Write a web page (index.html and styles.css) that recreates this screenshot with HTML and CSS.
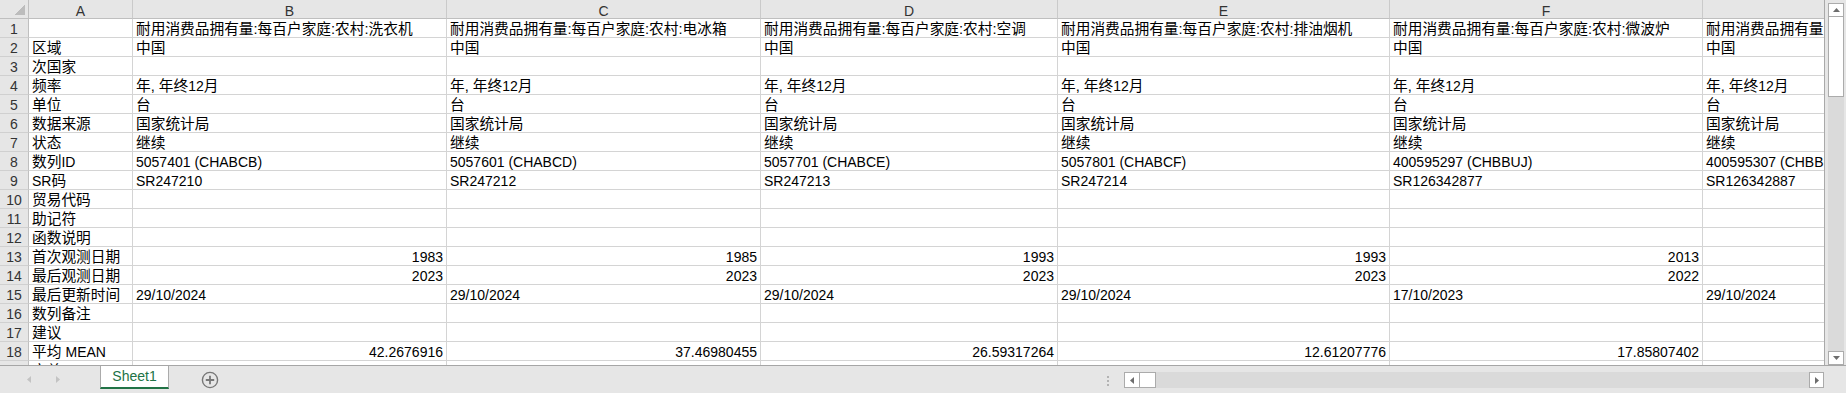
FILE: index.html
```html
<!DOCTYPE html>
<html lang="zh-CN">
  <head>
    <meta charset="UTF-8" />
    <title>Sheet1</title>
    <link rel="stylesheet" href="styles.css">
  </head>
  <body>
    <div class="app">
      <div class="sheet">
        <div class="cells">
          <div class="corner"></div>
          <div class="ch">A</div>
          <div class="ch">B</div>
          <div class="ch">C</div>
          <div class="ch">D</div>
          <div class="ch">E</div>
          <div class="ch">F</div>
          <div class="ch">G</div>

          <div class="rh">1</div>
          <div></div>
          <div>耐用消费品拥有量:每百户家庭:农村:洗衣机</div>
          <div>耐用消费品拥有量:每百户家庭:农村:电冰箱</div>
          <div>耐用消费品拥有量:每百户家庭:农村:空调</div>
          <div>耐用消费品拥有量:每百户家庭:农村:排油烟机</div>
          <div>耐用消费品拥有量:每百户家庭:农村:微波炉</div>
          <div>耐用消费品拥有量:每百户家庭:农村:彩色电视机</div>

          <div class="rh">2</div>
          <div>区域</div>
          <div>中国</div>
          <div>中国</div>
          <div>中国</div>
          <div>中国</div>
          <div>中国</div>
          <div>中国</div>

          <div class="rh">3</div>
          <div>次国家</div>
          <div></div><div></div><div></div><div></div><div></div><div></div>

          <div class="rh">4</div>
          <div>频率</div>
          <div>年, 年终<span class="en">12</span>月</div>
          <div>年, 年终<span class="en">12</span>月</div>
          <div>年, 年终<span class="en">12</span>月</div>
          <div>年, 年终<span class="en">12</span>月</div>
          <div>年, 年终<span class="en">12</span>月</div>
          <div>年, 年终<span class="en">12</span>月</div>

          <div class="rh">5</div>
          <div>单位</div>
          <div>台</div>
          <div>台</div>
          <div>台</div>
          <div>台</div>
          <div>台</div>
          <div>台</div>

          <div class="rh">6</div>
          <div>数据来源</div>
          <div>国家统计局</div>
          <div>国家统计局</div>
          <div>国家统计局</div>
          <div>国家统计局</div>
          <div>国家统计局</div>
          <div>国家统计局</div>

          <div class="rh">7</div>
          <div>状态</div>
          <div>继续</div>
          <div>继续</div>
          <div>继续</div>
          <div>继续</div>
          <div>继续</div>
          <div>继续</div>

          <div class="rh">8</div>
          <div>数列<span class="en">ID</span></div>
          <div class="en">5057401 (CHABCB)</div>
          <div class="en">5057601 (CHABCD)</div>
          <div class="en">5057701 (CHABCE)</div>
          <div class="en">5057801 (CHABCF)</div>
          <div class="en">400595297 (CHBBUJ)</div>
          <div class="en">400595307 (CHBBUK)</div>

          <div class="rh">9</div>
          <div><span class="en">SR</span>码</div>
          <div class="en">SR247210</div>
          <div class="en">SR247212</div>
          <div class="en">SR247213</div>
          <div class="en">SR247214</div>
          <div class="en">SR126342877</div>
          <div class="en">SR126342887</div>

          <div class="rh">10</div>
          <div>贸易代码</div>
          <div></div><div></div><div></div><div></div><div></div><div></div>

          <div class="rh">11</div>
          <div>助记符</div>
          <div></div><div></div><div></div><div></div><div></div><div></div>

          <div class="rh">12</div>
          <div>函数说明</div>
          <div></div><div></div><div></div><div></div><div></div><div></div>

          <div class="rh">13</div>
          <div>首次观测日期</div>
          <div class="num">1983</div>
          <div class="num">1985</div>
          <div class="num">1993</div>
          <div class="num">1993</div>
          <div class="num">2013</div>
          <div class="num">2013</div>

          <div class="rh">14</div>
          <div>最后观测日期</div>
          <div class="num">2023</div>
          <div class="num">2023</div>
          <div class="num">2023</div>
          <div class="num">2023</div>
          <div class="num">2022</div>
          <div class="num">2022</div>

          <div class="rh">15</div>
          <div>最后更新时间</div>
          <div class="en">29/10/2024</div>
          <div class="en">29/10/2024</div>
          <div class="en">29/10/2024</div>
          <div class="en">29/10/2024</div>
          <div class="en">17/10/2023</div>
          <div class="en">29/10/2024</div>

          <div class="rh">16</div>
          <div>数列备注</div>
          <div></div><div></div><div></div><div></div><div></div><div></div>

          <div class="rh">17</div>
          <div>建议</div>
          <div></div><div></div><div></div><div></div><div></div><div></div>

          <div class="rh">18</div>
          <div>平均 <span class="en">MEAN</span></div>
          <div class="num">42.2676916</div>
          <div class="num">37.46980455</div>
          <div class="num">26.59317264</div>
          <div class="num">12.61207776</div>
          <div class="num">17.85807402</div>
          <div class="num">15.29413870</div>

          <div class="rh">19</div>
          <div>方差 <span class="en">VARIANCE</span></div>
          <div></div><div></div><div></div><div></div><div></div><div></div>
        </div>
      </div>

      <div class="vscroll">
        <div class="vtrack">
          <div class="sbtn">
            <svg width="7" height="4" viewBox="0 0 7 4"><polygon points="3.5,0 7,4 0,4" fill="#6d6d6d"/></svg>
          </div>
          <div class="vthumb"></div>
          <div class="fill"></div>
          <div class="sbtn">
            <svg width="7" height="4" viewBox="0 0 7 4"><polygon points="0,0 7,0 3.5,4" fill="#6d6d6d"/></svg>
          </div>
        </div>
      </div>

      <div class="tabbar">
        <div class="tabnav">
          <svg width="4" height="7" viewBox="0 0 4 7"><polygon points="4,0 4,7 0,3.5" fill="#c3c3c3"/></svg>
          <svg width="4" height="7" viewBox="0 0 4 7"><polygon points="0,0 4,3.5 0,7" fill="#c3c3c3"/></svg>
        </div>
        <div class="tab">Sheet1</div>
        <svg class="addsheet" width="18" height="18" viewBox="0 0 18 18">
          <circle cx="9" cy="9" r="7.6" fill="none" stroke="#777" stroke-width="1.4"/>
          <path d="M9 4.8v8.4M4.8 9h8.4" stroke="#777" stroke-width="1.8"/>
        </svg>
        <div class="splitter"></div>
        <div class="hscroll">
          <div class="sbtn wide">
            <svg width="4" height="7" viewBox="0 0 4 7"><polygon points="4,0 4,7 0,3.5" fill="#6d6d6d"/></svg>
          </div>
          <div class="hthumb"></div>
          <div class="fill"></div>
          <div class="sbtn">
            <svg width="4" height="7" viewBox="0 0 4 7"><polygon points="0,0 4,3.5 0,7" fill="#6d6d6d"/></svg>
          </div>
        </div>
      </div>
    </div>
  </body>
</html>
```

FILE: styles.css
```css
* {
  box-sizing: border-box;
  margin: 0;
  padding: 0;
}

body {
  width: 1846px;
  height: 393px;
  overflow: hidden;
  background-color: #e6e6e6;
  color: #000;
  font-family: "Liberation Sans", "Noto Sans CJK SC", sans-serif;
  font-size: 14px;
}

.app {
  display: grid;
  grid-template-columns: 1825px 21px;
  grid-template-rows: 365px 28px;
}

/* sheet */

.sheet {
  overflow: hidden;
  background-color: #fff;
  border-right: 1px solid #a9a9a9;
}

.cells {
  display: grid;
  grid-template-columns: 29px 104px 314px 314px 297px 332px 313px 314px;
  grid-auto-rows: 19px;
  width: max-content;
}

/* cjk glyphs run a bit wide in excel, latin stays at 14px */
.cells > div {
  padding: 1px 3px 0;
  font-size: 14.7px;
  line-height: 18px;
  white-space: nowrap;
  overflow: hidden;
  border-right: 1px solid #d4d4d4;
  border-bottom: 1px solid #d4d4d4;
}

.cells .en,
.cells > .num {
  font-size: 14px;
}

.cells > .num {
  text-align: right;
}

.cells > .corner {
  background-color: #e6e6e6;
  background-image: linear-gradient(to bottom right, transparent 50%, #bcbcbc 50%);
  background-size: 10px 10px;
  background-position: right 3px bottom 3px;
  background-repeat: no-repeat;
  border-right-color: #bfbfbf;
  border-bottom-color: #bfbfbf;
}

.cells > .ch {
  padding-top: 2px;
  font-size: 14px;
  text-align: center;
  color: #333;
  background-color: #e6e6e6;
  border-right-color: #cacaca;
  border-bottom-color: #bfbfbf;
}

.cells > .rh {
  padding: 1px 0 0;
  font-size: 14px;
  text-align: center;
  color: #333;
  background-color: #e6e6e6;
  border-right-color: #bfbfbf;
  border-bottom-color: #d0d0d0;
}

/* scrollbars */

.vscroll {
  display: flex;
  padding: 3px 2px 0 3px;
}

.vtrack {
  flex: 1;
  display: flex;
  flex-direction: column;
  background-color: #dadada;
}

.sbtn {
  display: flex;
  align-items: center;
  justify-content: center;
  flex: 0 0 14px;
  width: 15px;
  background-color: #fff;
  border: 1px solid #ababab;
}

.vtrack .sbtn {
  width: 100%;
}

.vthumb {
  flex: 0 0 81px;
  margin-top: -1px;
  background-color: #fff;
  border: 1px solid #ababab;
}

.fill {
  flex: 1;
}

.tabbar {
  grid-column: 1 / 3;
  display: flex;
  align-items: center;
  border-top: 1px solid #a6a6a6;
}

.tabnav {
  display: flex;
  gap: 25px;
  width: 100px;
  padding-left: 27px;
}

.tab {
  align-self: flex-start;
  width: 69px;
  height: 23px;
  padding-bottom: 1px;
  display: flex;
  align-items: center;
  justify-content: center;
  color: #217346;
  background-color: #fff;
  border-left: 1px solid #ababab;
  border-right: 1px solid #ababab;
  border-bottom: 2px solid #217346;
}

.addsheet {
  margin-left: 32px;
}

.splitter {
  margin-left: auto;
  margin-right: 15px;
  width: 2px;
  height: 10px;
  margin-top: 2px;
  background-image: repeating-linear-gradient(#b3b3b3 0 2px, transparent 2px 4px);
}

.hscroll {
  align-self: flex-start;
  display: flex;
  width: 700px;
  height: 16px;
  margin-top: 6px;
  margin-right: 22px;
  background-color: #dadada;
}

.hscroll .sbtn {
  height: 100%;
  flex-basis: 15px;
}

.hscroll .sbtn.wide {
  flex-basis: 16px;
}

.hthumb {
  flex: 0 0 17px;
  margin-left: -1px;
  background-color: #fff;
  border: 1px solid #ababab;
}
```
